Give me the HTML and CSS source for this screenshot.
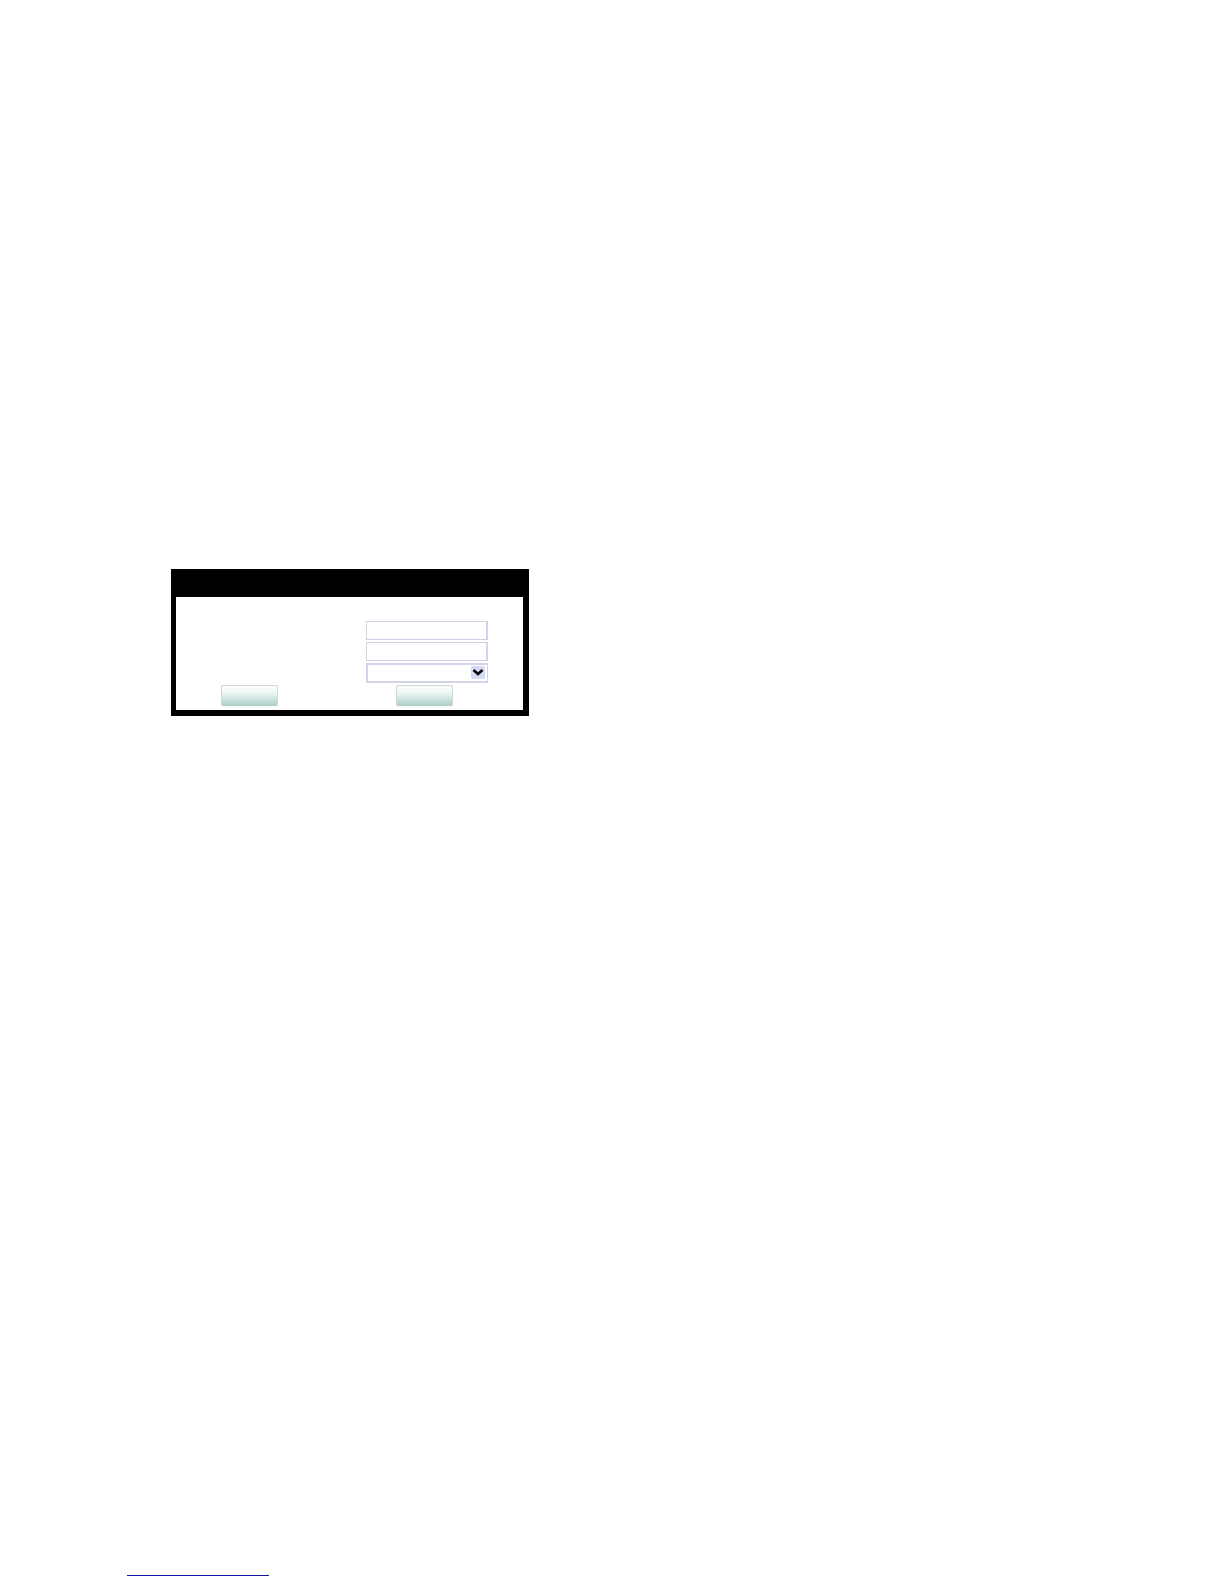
FILE: index.html
```
<!DOCTYPE html>
<html lang="en">

<head>
    <meta charset="UTF-8">
    <meta name="viewport" content="width=device-width, initial-scale=1.0">
    <title>Document</title>
    <link rel="stylesheet" href="styles.css">
</head>

<body>
    <main class="main">
        <form class="panel">
            <div class="fields">
                <label for="first"></label>
                <input type="text" id="first" class="field" aria-label="First value">
                <label for="second"></label>
                <input type="text" id="second" class="field" aria-label="Second value">
                <label for="option"></label>
                <div class="select">
                    <select id="option" class="field tall" aria-label="Option">
                        <option></option>
                    </select>
                    <svg class="arrow" width="14" height="13" viewBox="0 0 14 13" aria-hidden="true">
                        <rect width="14" height="13" rx="2" fill="#d6daf2"/>
                        <path d="M2.5 4L7 8L11.5 4" fill="none" stroke="#08080c" stroke-width="2.6"/>
                    </svg>
                </div>
            </div>
            <div class="buttons">
                <button type="button" class="btn" aria-label="OK"></button>
                <button type="button" class="btn" aria-label="Cancel"></button>
            </div>
        </form>
    </main>
    <footer class="footer">
        <a href="#" class="link" aria-label="Link"></a>
    </footer>
</body>

</html>
```

FILE: styles.css
```
* {
    margin: 0;
    padding: 0;
    box-sizing: border-box;
}

body {
    display: flex;
    flex-direction: column;
    min-height: 100vh;
    background: #fff;
    font-family: "Liberation Sans", Arial, sans-serif;
    font-size: 12px;
}

.main {
    flex: 1;
    padding: 569px 171px 0;
}

.panel {
    max-width: 358px;
    padding: 24px 35px 4px 0;
    border: solid #000;
    border-width: 28px 6px 6px 5px;
}

.fields {
    display: grid;
    grid-template-columns: 1fr 122px;
    row-gap: 2px;
}

.field {
    display: block;
    width: 100%;
    height: 19px;
    padding: 0 4px;
    border: 1px solid #d2d2e6;
    border-right: 2px solid #d4d2ee;
    border-bottom-color: #d0cdee;
    border-radius: 0;
    outline: none;
    background: #fff;
    font: inherit;
}

.select {
    position: relative;
}

.tall {
    height: 20px;
    border: 2px solid #d3d4ea;
    border-right-width: 1px;
    appearance: none;
}

.arrow {
    position: absolute;
    top: 3px;
    right: 3px;
    pointer-events: none;
}

.buttons {
    display: flex;
    gap: 118px;
    padding: 2px 0 0 45px;
}

.btn {
    width: 57px;
    height: 21px;
    border: 1px solid #cfd8d5;
    border-bottom-color: #b3cbc6;
    border-radius: 2px;
    background: linear-gradient(#fbfdfc, #eff7f5 35%, #cfe6e3 65%, #b0d0ca);
}

.footer {
    padding: 0 127px 8px;
}

.link {
    display: block;
    max-width: 142px;
    border-bottom: 1px solid #1414a0;
}
```
